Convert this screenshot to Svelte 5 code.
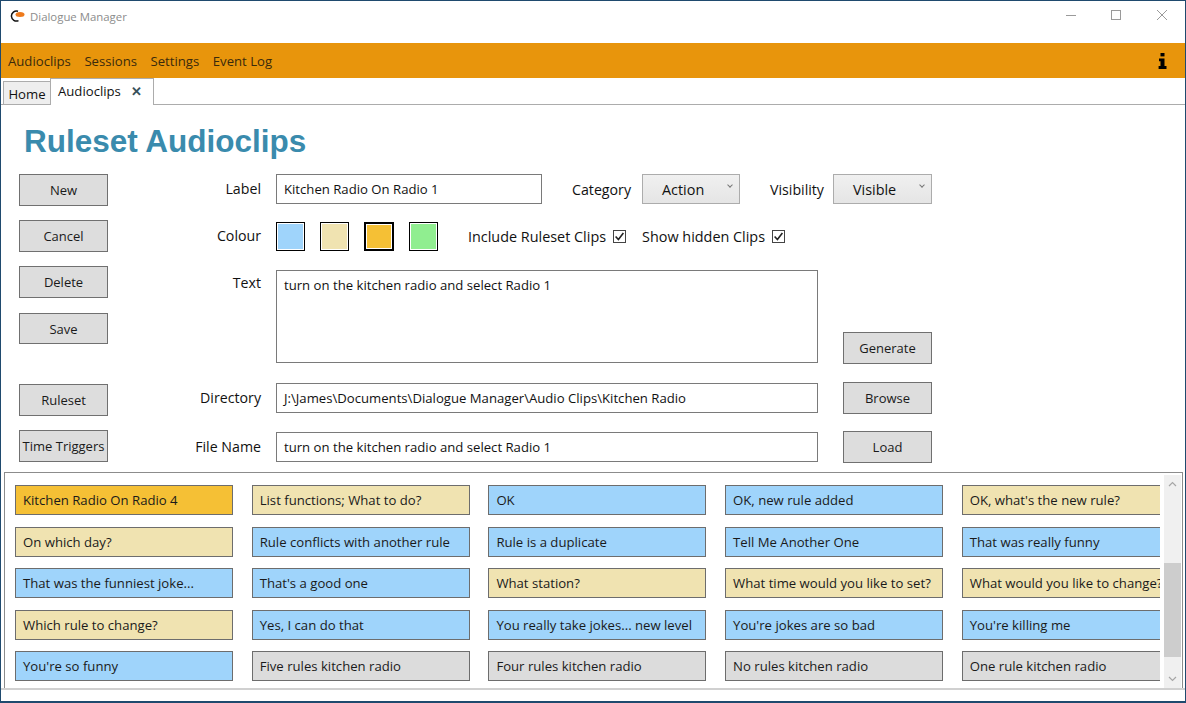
<script lang="ts">
  type Clip = { text: string; tone: 'blue' | 'tan' | 'gold' | 'grey' };

  const menu = ['Audioclips', 'Sessions', 'Settings', 'Event Log'];
  const swatches = [
    { tone: 'blue', active: false },
    { tone: 'tan', active: false },
    { tone: 'gold', active: true },
    { tone: 'green', active: false }
  ];
  const clips: Clip[] = [
    { text: 'Kitchen Radio On Radio 4', tone: 'gold' },
    { text: 'List functions; What to do?', tone: 'tan' },
    { text: 'OK', tone: 'blue' },
    { text: 'OK, new rule added', tone: 'blue' },
    { text: "OK, what's the new rule?", tone: 'tan' },
    { text: 'On which day?', tone: 'tan' },
    { text: 'Rule conflicts with another rule', tone: 'blue' },
    { text: 'Rule is a duplicate', tone: 'blue' },
    { text: 'Tell Me Another One', tone: 'blue' },
    { text: 'That was really funny', tone: 'blue' },
    { text: 'That was the funniest joke...', tone: 'blue' },
    { text: "That's a good one", tone: 'blue' },
    { text: 'What station?', tone: 'tan' },
    { text: 'What time would you like to set?', tone: 'tan' },
    { text: 'What would you like to change?', tone: 'tan' },
    { text: 'Which rule to change?', tone: 'tan' },
    { text: 'Yes, I can do that', tone: 'blue' },
    { text: 'You really take jokes... new level', tone: 'blue' },
    { text: "You're jokes are so bad", tone: 'blue' },
    { text: "You're killing me", tone: 'blue' },
    { text: "You're so funny", tone: 'blue' },
    { text: 'Five rules kitchen radio', tone: 'grey' },
    { text: 'Four rules kitchen radio', tone: 'grey' },
    { text: 'No rules kitchen radio', tone: 'grey' },
    { text: 'One rule kitchen radio', tone: 'grey' }
  ];
</script>

<div class="window">
  <header class="titlebar">
    <svg class="logo" width="15" height="13" viewBox="0 0 15 13" aria-hidden="true">
      <path d="M8 1.300A5 5 0 1 0 8.500 10.600" fill="none" stroke="#111" stroke-width="1.500" />
      <ellipse cx="10" cy="4.600" rx="4.500" ry="2.500" fill="#ee7a1c" />
    </svg>
    <span class="title">Dialogue Manager</span>
    <div class="controls">
      <svg width="12" height="12" viewBox="0 0 12 12" aria-hidden="true"><path d="M0 5.500h10" stroke="#9a9a9a" /></svg>
      <svg width="12" height="12" viewBox="0 0 12 12" aria-hidden="true"><rect x=".5" y=".5" width="9" height="9" fill="none" stroke="#9a9a9a" /></svg>
      <svg width="12" height="12" viewBox="0 0 12 12" aria-hidden="true"><path d="M1 0l10 10M11 0L1 10" stroke="#9a9a9a" /></svg>
    </div>
  </header>

  <nav class="menubar">
    {#each menu as item}
      <span>{item}</span>
    {/each}
    <svg class="info" width="9" height="16" viewBox="0 0 9 16" aria-hidden="true">
      <rect x="2.500" y="0" width="4" height="3.400" fill="#000" />
      <path d="M1 5.500h5.500V13H8.500v3H.6V13h1.900V8.200H1z" fill="#000" />
    </svg>
  </nav>

  <div class="tabs">
    <span class="tab home">Home</span>
    <span class="tab current">Audioclips <b>✕</b></span>
  </div>

  <main class="panel">
    <h1>Ruleset Audioclips</h1>

    <div class="form">
      <div class="actions">
        <button class="new">New</button>
        <button class="cancel">Cancel</button>
        <button class="delete">Delete</button>
        <button class="save">Save</button>
        <button class="ruleset">Ruleset</button>
        <button class="triggers">Time Triggers</button>
      </div>

      <div class="fields">
        <div class="row first">
          <label for="clip-label">Label</label>
          <div class="box short" id="clip-label">Kitchen Radio On Radio 1</div>
          <span class="caption cat">Category</span>
          <div class="select cat-select">Action<i></i></div>
          <span class="caption vis">Visibility</span>
          <div class="select vis-select">Visible<i></i></div>
        </div>

        <div class="row second">
          <label for="swatches">Colour</label>
          <div class="swatches" id="swatches">
            {#each swatches as s}
              <span class="swatch {s.tone}" class:active={s.active}></span>
            {/each}
          </div>
          <span class="check first-check">Include Ruleset Clips
            <svg width="13" height="13" viewBox="0 0 13 13" aria-hidden="true"><rect x=".5" y=".5" width="12" height="12" fill="#fff" stroke="#444" /><path d="M2.600 6.500l2.800 3 5-6.500" fill="none" stroke="#222" stroke-width="1.600" /></svg>
          </span>
          <span class="check">Show hidden Clips
            <svg width="13" height="13" viewBox="0 0 13 13" aria-hidden="true"><rect x=".5" y=".5" width="12" height="12" fill="#fff" stroke="#444" /><path d="M2.600 6.500l2.800 3 5-6.500" fill="none" stroke="#222" stroke-width="1.600" /></svg>
          </span>
        </div>

        <div class="row third">
          <label class="top" for="clip-text">Text</label>
          <div class="box area" id="clip-text">turn on the kitchen radio and select Radio 1</div>
          <button class="side end">Generate</button>
        </div>

        <div class="row fourth">
          <label for="clip-dir">Directory</label>
          <div class="box wide" id="clip-dir">J:\James\Documents\Dialogue Manager\Audio Clips\Kitchen Radio</div>
          <button class="side">Browse</button>
        </div>

        <div class="row fifth">
          <label for="clip-file">File Name</label>
          <div class="box wide" id="clip-file">turn on the kitchen radio and select Radio 1</div>
          <button class="side">Load</button>
        </div>
      </div>
    </div>

    <section class="clips">
      <div class="clip-grid">
        {#each clips as clip}
          <div class="clip {clip.tone}">{clip.text}</div>
        {/each}
      </div>
      <div class="scrollbar">
        <svg width="9" height="6" viewBox="0 0 9 6" aria-hidden="true"><path d="M1 5l3.500-3.500L8 5" fill="none" stroke="#a6a6a6" stroke-width="1.200" /></svg>
        <div class="track"><div class="thumb"></div></div>
        <svg width="9" height="6" viewBox="0 0 9 6" aria-hidden="true"><path d="M1 1l3.500 3.500L8 1" fill="none" stroke="#a6a6a6" stroke-width="1.200" /></svg>
      </div>
    </section>
  </main>
</div>

<style>
  :global(body) {
    margin: 0;
    background: #fff;
  }
  .window {
    box-sizing: border-box;
    width: 1186px;
    height: 703px;
    display: flex;
    flex-direction: column;
    overflow: hidden;
    border: 1px solid #1f4a6e;
    border-bottom-width: 2px;
    background: #fff;
    font-family: "Open Sans", "Noto Sans", sans-serif;
    font-size: 13.15px;
    color: #111;
  }

  .titlebar {
    height: 42px;
    flex: none;
    display: flex;
    align-items: flex-start;
    padding: 8px 0 0 9px;
    box-sizing: border-box;
  }
  .logo {
    margin-right: 5px;
    margin-top: 1px;
  }
  .title {
    font-size: 11.4px;
    color: #8c8c8c;
    line-height: 15px;
  }
  .controls {
    margin-left: auto;
    display: flex;
    gap: 33px;
    padding-right: 17px;
    padding-top: 1px;
  }

  .menubar {
    height: 35px;
    flex: none;
    display: flex;
    align-items: center;
    gap: 13.5px;
    padding: 0 7px;
    background: #e8950c;
    color: #3a2a0c;
  }
  .info {
    margin-left: auto;
    margin-right: 11px;
  }

  .tabs {
    height: 27px;
    flex: none;
    display: flex;
    align-items: flex-end;
    border-bottom: 1px solid #acacac;
    box-sizing: border-box;
    padding-left: 2px;
  }
  .tab {
    box-sizing: border-box;
    border: 1px solid #acacac;
    border-bottom: none;
  }
  .home {
    height: 23px;
    width: 48px;
    background: #eee;
    text-align: center;
    line-height: 24px;
    margin-right: -1px;
  }
  .current {
    height: 27px;
    width: 104px;
    background: #fff;
    padding-left: 7px;
    line-height: 24px;
    margin-bottom: -1px;
  }
  .current b {
    color: #37505a;
    font-size: 13px;
    margin-left: 7px;
  }

  .panel {
    flex: 1;
    min-height: 0;
    display: flex;
    flex-direction: column;
    border-bottom: 2px solid #d0d0d0;
    margin-bottom: 11px;
    padding: 0 2px 0 3px;
  }
  h1 {
    margin: 18px 0 0 20px;
    height: 51px;
    flex: none;
    font: bold 31.5px/36px "Liberation Sans", Arial, sans-serif;
    color: #3a8bad;
  }

  button {
    display: block;
    box-sizing: border-box;
    margin: 0;
    padding: 0;
    background: #dddddd;
    border: 1px solid #707070;
    font: inherit;
    font-size: 13px;
    color: #1a1a1a;
  }

  .form {
    flex: none;
    height: 298px;
    display: flex;
    padding-left: 15px;
  }
  .actions {
    flex: none;
    width: 89px;
  }
  .actions button {
    width: 89px;
    height: 32px;
    margin-bottom: 14px;
  }
  .actions .delete {
    margin-bottom: 15px;
  }
  .actions .save {
    height: 31px;
    margin-bottom: 40px;
  }

  .fields {
    flex: 1;
    display: flex;
    flex-direction: column;
  }
  .row {
    display: flex;
    align-items: center;
  }
  .row label {
    width: 153px;
    margin-right: 15px;
    margin-top: -2px;
    text-align: right;
    flex: none;
    font-size: 14.2px;
  }
  .row label.top {
    align-self: flex-start;
    margin-top: 3px;
  }
  .first { height: 30px; }
  .second { height: 29px; margin-top: 18px; }
  .third { height: 93px; margin-top: 19px; align-items: flex-start; }
  .fourth { height: 32px; margin-top: 19px; }
  .fifth { height: 32px; margin-top: 17px; }

  .box {
    box-sizing: border-box;
    height: 30px;
    border: 1px solid #7a7a7a;
    padding: 0 7px;
    line-height: 28px;
    background: #fff;
  }
  .short { width: 266px; }
  .wide { width: 542px; line-height: 29px; }
  .area { width: 542px; height: 93px; }
  .side {
    width: 89px;
    height: 32px;
    margin-left: 25px;
  }
  .end {
    margin-top: 62px;
  }

  .caption { font-size: 14.2px; }
  .cat { margin-left: 30px; margin-right: 11px; }
  .vis { margin-left: 30px; margin-right: 8px; }
  .select {
    box-sizing: border-box;
    height: 30px;
    border: 1px solid #acacac;
    background: linear-gradient(#f0f0f0, #e5e5e5);
    padding-left: 19px;
    line-height: 29px;
    font-size: 14.4px;
    position: relative;
  }
  .cat-select { width: 98px; }
  .vis-select { width: 99px; margin-left: 1px; }
  .select i {
    position: absolute;
    right: 7px;
    top: 8px;
    width: 3px;
    height: 3px;
    border-right: 1px solid #777;
    border-bottom: 1px solid #777;
    transform: rotate(45deg);
  }

  .swatches {
    display: flex;
    width: 192px;
  }
  .swatch {
    box-sizing: border-box;
    width: 29px;
    height: 29px;
    margin-right: 15px;
    border: 1px solid #000;
    box-shadow: inset 0 0 0 1px #fff;
  }
  .swatch.active {
    width: 30px;
    border-width: 2px;
  }
  .swatch.blue, .clip.blue { background: #9fd4fb; }
  .swatch.tan, .clip.tan { background: #f0e3b1; }
  .swatch.gold, .clip.gold { background: #f5c035; }
  .swatch.green { background: #90ee90; }
  .clip.grey { background: #dcdcdc; }

  .check {
    display: inline-flex;
    align-items: center;
    gap: 7px;
    font-size: 14.4px;
  }
  .first-check { margin-right: 16px; }

  .clips {
    flex: 1;
    min-height: 0;
    display: flex;
    overflow: hidden;
    border: 1px solid #8c8c8c;
    border-bottom: none;
    padding: 12px 0 0 10px;
  }
  .clip-grid {
    flex: none;
    width: 1145px;
    display: grid;
    grid-template-columns: repeat(5, 218px);
    column-gap: 18.7px;
    row-gap: 11.5px;
    align-content: start;
    overflow: hidden;
  }
  .clip {
    box-sizing: border-box;
    height: 30px;
    border: 1px solid #6d6d6d;
    padding-left: 7px;
    line-height: 28px;
    white-space: nowrap;
    overflow: hidden;
    color: #1a1a1a;
  }
  .scrollbar {
    flex: none;
    width: 17px;
    margin-top: -10px;
    margin-left: 4px;
    background: #f0f0f0;
    display: flex;
    flex-direction: column;
    align-items: center;
    padding: 6px 0;
    box-sizing: border-box;
  }
  .track {
    flex: 1;
    width: 100%;
    padding-top: 76px;
    box-sizing: border-box;
  }
  .thumb {
    height: 94px;
    background: #cdcdcd;
  }
</style>
